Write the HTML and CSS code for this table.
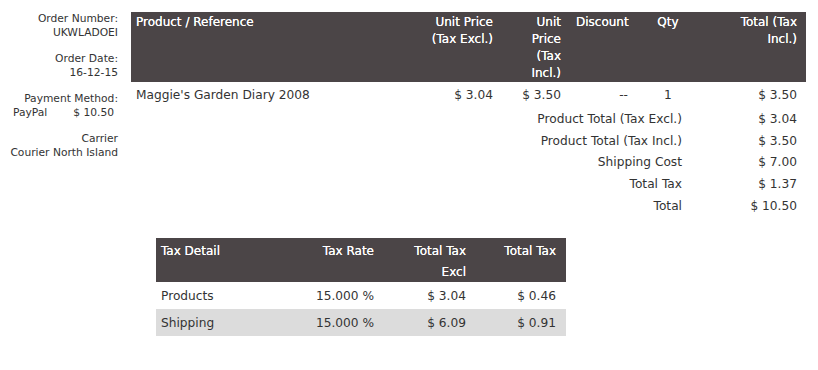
FILE: index.html
```html
<!DOCTYPE html>
<html>
<head>
<meta charset="utf-8">
<link rel="stylesheet" href="styles.css">
</head>
<body>
<div class="page">
  <div class="top">
    <div class="meta">
      <div class="block"><div>Order Number:</div><div>UKWLADOEI</div></div>
      <div class="block"><div>Order Date:</div><div>16-12-15</div></div>
      <div class="block"><div>Payment Method:</div><div class="pay"><span>PayPal</span><span>$ 10.50</span></div></div>
      <div class="block"><div>Carrier</div><div>Courier North Island</div></div>
    </div>
    <table class="products">
      <colgroup>
        <col class="c-name"><col class="c-pe"><col class="c-pi"><col class="c-disc"><col class="c-qty"><col class="c-tot">
      </colgroup>
      <thead>
        <tr>
          <th class="left">Product / Reference</th>
          <th class="right">Unit Price (Tax Excl.)</th>
          <th class="right narrow">Unit Price (Tax Incl.)</th>
          <th class="left disc">Discount</th>
          <th class="center">Qty</th>
          <th class="right">Total (Tax<br>Incl.)</th>
        </tr>
      </thead>
      <tbody>
        <tr class="item">
          <td>Maggie's Garden Diary 2008</td>
          <td class="right">$ 3.04</td>
          <td class="right">$ 3.50</td>
          <td class="right dash">--</td>
          <td class="center">1</td>
          <td class="right">$ 3.50</td>
        </tr>
        <tr class="sum"><td colspan="5" class="label">Product Total (Tax Excl.)</td><td class="right">$ 3.04</td></tr>
        <tr class="sum"><td colspan="5" class="label">Product Total (Tax Incl.)</td><td class="right">$ 3.50</td></tr>
        <tr class="sum"><td colspan="5" class="label">Shipping Cost</td><td class="right">$ 7.00</td></tr>
        <tr class="sum"><td colspan="5" class="label">Total Tax</td><td class="right">$ 1.37</td></tr>
        <tr class="sum"><td colspan="5" class="label">Total</td><td class="right">$ 10.50</td></tr>
      </tbody>
    </table>
  </div>
  <table class="tax">
    <colgroup><col class="t1"><col class="t2"><col class="t3"><col class="t4"></colgroup>
    <thead>
      <tr>
        <th class="left">Tax Detail</th>
        <th class="right">Tax Rate</th>
        <th class="right">Total Tax<br>Excl</th>
        <th class="right">Total Tax</th>
      </tr>
    </thead>
    <tbody>
      <tr><td>Products</td><td class="right">15.000 %</td><td class="right">$ 3.04</td><td class="right">$ 0.46</td></tr>
      <tr class="alt"><td>Shipping</td><td class="right">15.000 %</td><td class="right">$ 6.09</td><td class="right">$ 0.91</td></tr>
    </tbody>
  </table>
</div>
</body>
</html>
```

FILE: styles.css
```css
* { box-sizing: border-box; }
body {
  margin: 0;
  background: #ffffff;
  font-family: "DejaVu Sans", sans-serif;
  color: #333333;
}
.page { padding: 12px 0 0 0; }
.top { display: flex; align-items: flex-start; }
.meta {
  width: 131px;
  padding-right: 13px;
  text-align: right;
  font-size: 10.7px;
  line-height: 14px;
  display: flex;
  flex-direction: column;
  gap: 12px;
}
.pay { display: flex; justify-content: space-between; padding-left: 13px; padding-right: 4px; }
table { border-collapse: collapse; }
.products { width: 675px; font-size: 12.2px; }
.c-name { width: 280px; }
.c-pe { width: 87px; }
.c-pi { width: 68px; }
.c-disc { width: 68px; }
.c-qty { width: 68px; }
.c-tot { width: 104px; }
th {
  background: #4b4547;
  color: #ffffff;
  font-weight: normal;
  vertical-align: top;
  font-size: 12px;
  text-shadow: 0 0 0.4px #ffffff;
}
.products th { line-height: 17px; padding: 2px 5px 0 5px; height: 68px; }
.products th:last-child { padding-right: 9px; }
.products th.narrow { padding-left: 24px; }
.products th.disc { padding-left: 10px; }
.left { text-align: left; }
.right { text-align: right; }
.center { text-align: center; }
.products td { padding: 0 5px; height: 21.7px; line-height: 16px; }
.products td:last-child { padding-right: 9px; }
.products .item td { height: 26px; padding-top: 5px; vertical-align: top; }
.products td.dash { padding-right: 6px; }
.products td.label { padding-right: 20px; text-align: right; }
.tax { margin: 22px 0 0 156px; width: 410px; font-size: 12.2px; }
.t1 { width: 140px; }
.t2 { width: 83px; }
.t3 { width: 92px; }
.t4 { width: 95px; }
.tax th { line-height: 20.5px; padding: 3px 5px 0 5px; height: 44px; }
.tax th:last-child, .tax td:last-child { padding-right: 10px; }
.tax td { padding: 0 5px; height: 27px; line-height: 16px; }
.tax tr.alt td { background: #dcdcdc; }
```
